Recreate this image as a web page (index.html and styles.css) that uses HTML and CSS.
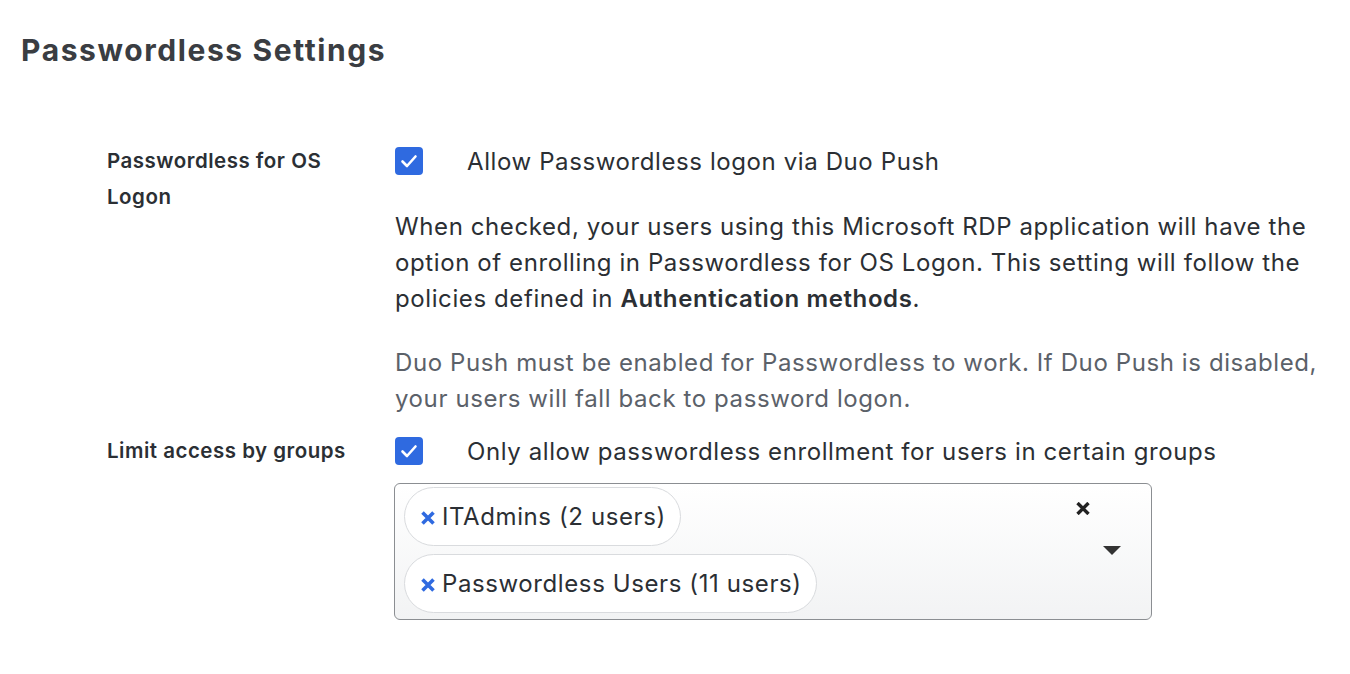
FILE: index.html
```html
<!DOCTYPE html>
<html>
<head>
<meta charset="utf-8">
<link rel="stylesheet" href="styles.css">
</head>
<body>
<div class="page">
  <h1 class="title">Passwordless Settings</h1>
  <div class="form">
    <div class="row">
      <div class="label">Passwordless for OS<br>Logon</div>
      <div class="control">
        <label class="check">
          <span class="box"><svg viewBox="0 0 28 28" width="28" height="28"><path d="M7.5 14.5 L12 19 L20.5 9.5" fill="none" stroke="#fff" stroke-width="2.6" stroke-linecap="round" stroke-linejoin="round"/></svg></span>
          <span class="check-text">Allow Passwordless logon via Duo Push</span>
        </label>
        <p class="desc">When checked, your users using this Microsoft RDP application will have the option of enrolling in Passwordless for OS Logon. This setting will follow the policies defined in <strong>Authentication methods</strong>.</p>
        <p class="note">Duo Push must be enabled for Passwordless to work. If Duo Push is disabled, your users will fall back to password logon.</p>
      </div>
    </div>
    <div class="row row2">
      <div class="label">Limit access by groups</div>
      <div class="control">
        <label class="check">
          <span class="box"><svg viewBox="0 0 28 28" width="28" height="28"><path d="M7.5 14.5 L12 19 L20.5 9.5" fill="none" stroke="#fff" stroke-width="2.6" stroke-linecap="round" stroke-linejoin="round"/></svg></span>
          <span class="check-text">Only allow passwordless enrollment for users in certain groups</span>
        </label>
        <div class="select">
          <div class="chips">
            <span class="chip"><svg class="chip-x" viewBox="0 0 16 14" width="16" height="14"><path d="M2.5 1.5 L13.5 12.5 M13.5 1.5 L2.5 12.5" stroke="#2f6ae0" stroke-width="3.6"/></svg>ITAdmins (2 users)</span>
            <span class="chip"><svg class="chip-x" viewBox="0 0 16 14" width="16" height="14"><path d="M2.5 1.5 L13.5 12.5 M13.5 1.5 L2.5 12.5" stroke="#2f6ae0" stroke-width="3.6"/></svg>Passwordless Users (11 users)</span>
          </div>
          <div class="select-tools">
            <svg class="clear" viewBox="0 0 14 13" width="14" height="13"><path d="M1.5 1 L12.5 12 M12.5 1 L1.5 12" stroke="#222" stroke-width="3.4"/></svg>
            <span class="arrow"></span>
          </div>
        </div>
      </div>
    </div>
  </div>
</div>
</body>
</html>
```
FILE: styles.css
```css
html, body {
  margin: 0;
  padding: 0;
  background: #fff;
}
body {
  font-family: Inter, "Noto Sans", sans-serif;
  color: #2b2f34;
}
.page {
  padding: 25px 0 0 21px;
}
.title {
  margin: 0;
  font-size: 30px;
  line-height: 50px;
  font-weight: 700;
  color: #3a3d42;
  letter-spacing: 1.6px;
}
.form {
  padding-top: 68px;
  padding-left: 86px;
}
.row {
  display: flex;
}
.row2 {
  margin-top: 16px;
}
.label {
  width: 288px;
  flex: none;
  font-size: 20.5px;
  font-weight: 600;
  letter-spacing: 0.5px;
  line-height: 36px;
  color: #2b2f34;
}
.control {
  flex: 1;
  width: 940px;
}
.check {
  display: flex;
  align-items: center;
  height: 36px;
}
.box {
  width: 28px;
  height: 28px;
  border-radius: 4px;
  background: #2f6ae0;
  display: block;
  flex: none;
}
.box svg {
  display: block;
}
.check-text {
  margin-left: 44px;
  padding-top: 2px;
  font-size: 24px;
  letter-spacing: 0.6px;
  line-height: 36px;
}
.desc {
  margin: 30px 0 0;
  font-size: 24px;
  letter-spacing: 0.6px;
  line-height: 36px;
  width: 940px;
}
.desc strong {
  font-weight: 600;
}
.note {
  margin: 28px 0 0;
  font-size: 24px;
  letter-spacing: 0.6px;
  line-height: 36px;
  color: #5b6169;
  width: 940px;
}
.select {
  margin-top: 14px;
  margin-left: -1px;
  width: 758px;
  height: 137px;
  border: 1px solid #8b8e92;
  border-radius: 6px;
  background: linear-gradient(#ffffff, #f2f3f4);
  display: flex;
  box-sizing: border-box;
}
.chips {
  flex: 1;
  padding: 3px 0 0 9px;
  display: flex;
  flex-direction: column;
  align-items: flex-start;
  gap: 8px;
}
.chip {
  display: inline-flex;
  align-items: center;
  height: 59px;
  box-sizing: border-box;
  border: 1px solid #d9dbde;
  border-radius: 30px;
  background: #fff;
  padding: 0 14px 0 15px;
  font-size: 24px;
  letter-spacing: 0.6px;
  color: #2b2f34;
}
.chip-x {
  display: block;
  flex: none;
  margin-right: 6px;
  margin-top: 2px;
}
.select-tools {
  width: 70px;
  position: relative;
}
.clear {
  position: absolute;
  left: -5px;
  top: 18px;
}
.arrow {
  position: absolute;
  left: 22px;
  top: 62px;
  width: 0;
  height: 0;
  border-left: 9px solid transparent;
  border-right: 9px solid transparent;
  border-top: 9px solid #333;
}
```
